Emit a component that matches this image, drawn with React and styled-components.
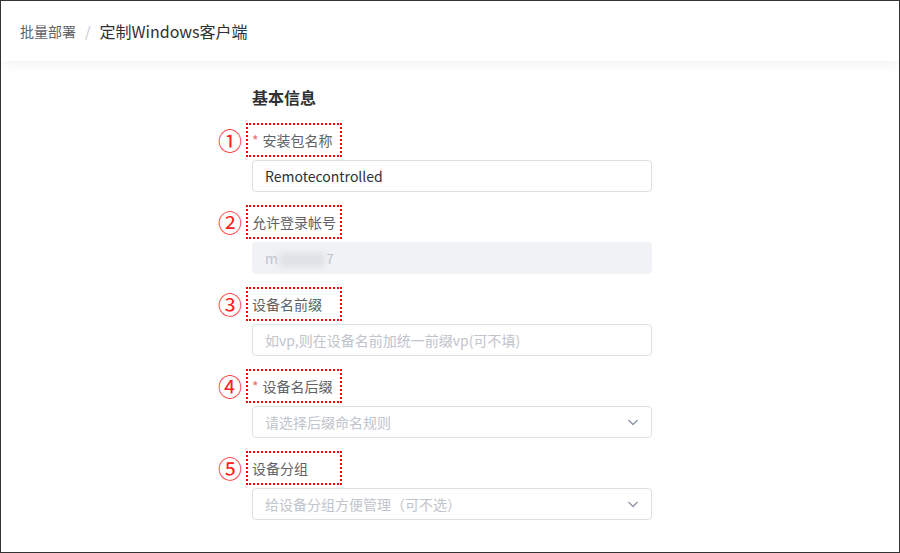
import React from 'react';
import styled, { createGlobalStyle } from 'styled-components';

const GlobalStyle = createGlobalStyle`
  html, body {
    margin: 0;
    padding: 0;
    background: #ffffff;
  }
  * {
    box-sizing: border-box;
  }
  body {
    font-family: "Noto Sans CJK SC", "Noto Sans", sans-serif;
  }
`;

const Frame = styled.div`
  width: 900px;
  height: 553px;
  border: 1px solid #333333;
  background: #ffffff;
  overflow: hidden;
`;

const Header = styled.header`
  position: relative;
  z-index: 1;
  height: 60px;
  display: flex;
  align-items: center;
  padding-left: 19px;
  background: #ffffff;
  box-shadow: 0 4px 10px rgba(0, 0, 0, 0.045);
`;

const Crumb = styled.span`
  font-size: ${({ $current }) => ($current ? '16px' : '14px')};
  color: ${({ $current }) => ($current ? '#303133' : '#606266')};
  line-height: 20px;
`;

const Sep = styled.span`
  margin: 0 9px;
  color: #c0c4cc;
  font-size: 14px;
`;

const Body = styled.main`
  padding: 24px 0 0 217px;
`;

const Title = styled.h3`
  margin: 0 0 14px 34px;
  font-size: 16px;
  line-height: 24px;
  font-weight: 700;
  color: #303133;
`;

const Item = styled.div`
  margin-bottom: 13px;
`;

const LabelRow = styled.div`
  display: flex;
  align-items: center;
  height: 34px;
  margin-bottom: 3px;
`;

const Marker = styled.span`
  width: 28px;
  font-size: 24px;
  line-height: 34px;
  color: #ff2020;
  text-align: left;
`;

const LabelBox = styled.label`
  width: 96px;
  height: 34px;
  display: flex;
  align-items: center;
  padding-left: 4px;
  border: 2px dotted #ff0000;
  font-size: 14px;
  color: #606266;
  white-space: nowrap;
`;

const Star = styled.span`
  color: #f56c6c;
  margin-right: 4px;
`;

const Control = styled.div`
  margin-left: 34px;
  width: 400px;
  height: 32px;
  display: flex;
  align-items: center;
  justify-content: space-between;
  padding: 0 12px;
  border: 1px solid ${({ $disabled }) => ($disabled ? '#f0f2f5' : '#dcdfe6')};
  border-radius: 4px;
  background: ${({ $disabled }) => ($disabled ? '#f0f2f5' : '#ffffff')};
  font-size: 14px;
  color: ${({ $muted }) => ($muted ? '#c0c4cc' : '#303133')};
`;

const Blurred = styled.span`
  display: inline-block;
  width: 46px;
  height: 14px;
  margin: 0 1px;
  vertical-align: middle;
  background: #dfe1e5;
  filter: blur(3px);
`;

const Chevron = () => (
  <svg width="12" height="12" viewBox="0 0 12 12">
    <polyline points="1.5,4 6,8.5 10.5,4" fill="none" stroke="#8a94a6" strokeWidth="1.3" />
  </svg>
);

const fields = [
  { n: '①', label: '安装包名称', required: true, value: 'Remotecontrolled' },
  { n: '②', label: '允许登录帐号', disabled: true },
  { n: '③', label: '设备名前缀', placeholder: '如vp,则在设备名前加统一前缀vp(可不填)' },
  { n: '④', label: '设备名后缀', required: true, placeholder: '请选择后缀命名规则', select: true },
  { n: '⑤', label: '设备分组', placeholder: '给设备分组方便管理（可不选）', select: true },
];

export default function App() {
  return (
    <>
      <GlobalStyle />
      <Frame>
        <Header>
          <Crumb>批量部署</Crumb>
          <Sep>/</Sep>
          <Crumb $current>定制Windows客户端</Crumb>
        </Header>
        <Body>
          <Title>基本信息</Title>
          {fields.map((f) => (
            <Item key={f.label}>
              <LabelRow>
                <Marker>{f.n}</Marker>
                <LabelBox>
                  {f.required && <Star>*</Star>}
                  {f.label}
                </LabelBox>
              </LabelRow>
              {f.disabled ? (
                <Control $disabled $muted>
                  <span>
                    m<Blurred />7
                  </span>
                </Control>
              ) : (
                <Control $muted={!f.value}>
                  <span>{f.value || f.placeholder}</span>
                  {f.select && <Chevron />}
                </Control>
              )}
            </Item>
          ))}
        </Body>
      </Frame>
    </>
  );
}
